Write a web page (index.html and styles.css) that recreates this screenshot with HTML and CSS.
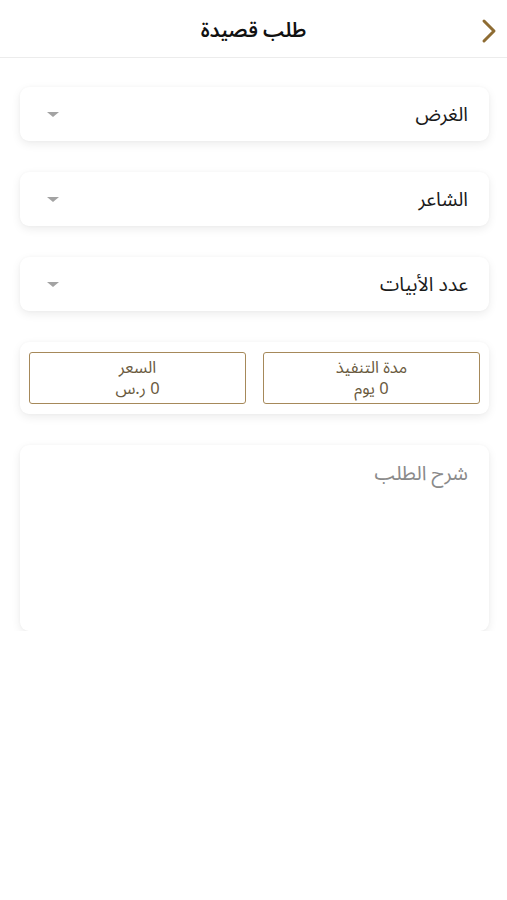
FILE: index.html
```html
<!DOCTYPE html>
<html lang="ar" dir="rtl">
<head>
<meta charset="utf-8">
<link rel="stylesheet" href="styles.css">
</head>
<body>
<header class="topbar">
  <span class="back">
    <svg width="16" height="26" viewBox="0 0 16 26"><path d="M3 3 L13 13 L3 23" fill="none" stroke="#8e6c33" stroke-width="3" stroke-linecap="round" stroke-linejoin="round"/></svg>
  </span>
  <h1 class="title">طلب قصيدة</h1>
</header>
<main class="content">
  <div class="card select"><span class="label">الغرض</span><span class="caret"></span></div>
  <div class="card select"><span class="label">الشاعر</span><span class="caret"></span></div>
  <div class="card select"><span class="label">عدد الأبيات</span><span class="caret"></span></div>
  <div class="card info">
    <div class="box"><div class="line">مدة التنفيذ</div><div class="line">0 يوم</div></div>
    <div class="box"><div class="line">السعر</div><div class="line">0 ر.س</div></div>
  </div>
  <div class="card notes"><span class="placeholder">شرح الطلب</span></div>
</main>
</body>
</html>
```
FILE: styles.css
```css
* { box-sizing: border-box; }
html, body { margin: 0; padding: 0; background: #fff; }
body {
  font-family: "Noto Sans Arabic", "DejaVu Sans", "Noto Sans", sans-serif;
  color: #111;
  width: 507px;
}
.topbar {
  position: relative;
  height: 58px;
  border-bottom: 1px solid #ececec;
  display: flex;
  align-items: center;
  justify-content: center;
}
.title {
  margin: 0;
  font-size: 20px;
  font-weight: 600;
  color: #111;
  padding-top: 4px;
}
.back {
  position: absolute;
  right: 10px;
  top: 18px;
  display: block;
  width: 16px;
  height: 26px;
}
.back svg { display: block; }
.content {
  padding: 29px 18px 0 20px;
  display: flex;
  flex-direction: column;
  gap: 31px;
}
.card {
  background: #fff;
  border-radius: 9px;
  box-shadow: 0 3px 10px rgba(0,0,0,0.08), 0 0 3px rgba(0,0,0,0.03);
}
.select {
  height: 54px;
  display: flex;
  align-items: center;
  justify-content: space-between;
  padding: 0 21px 0 27px;
}
.label { font-size: 19.5px; color: #1a1a1a; }
.caret {
  width: 0; height: 0;
  border-left: 6px solid transparent;
  border-right: 6px solid transparent;
  border-top: 5px solid #a3a3a3;
}
.info {
  height: 72px;
  display: flex;
  gap: 17px;
  padding: 10px 9px;
}
.box {
  flex: 1;
  border: 1.5px solid #a6895a;
  border-radius: 3px;
  display: flex;
  flex-direction: column;
  align-items: center;
  justify-content: center;
  color: #6a5a40;
}
.line {
  font-size: 16.5px;
  line-height: 21px;
  height: 21px;
}
.notes {
  height: 186px;
  padding: 8px 21px;
}
.placeholder { font-size: 20px; color: #8a8a8a; }
```
